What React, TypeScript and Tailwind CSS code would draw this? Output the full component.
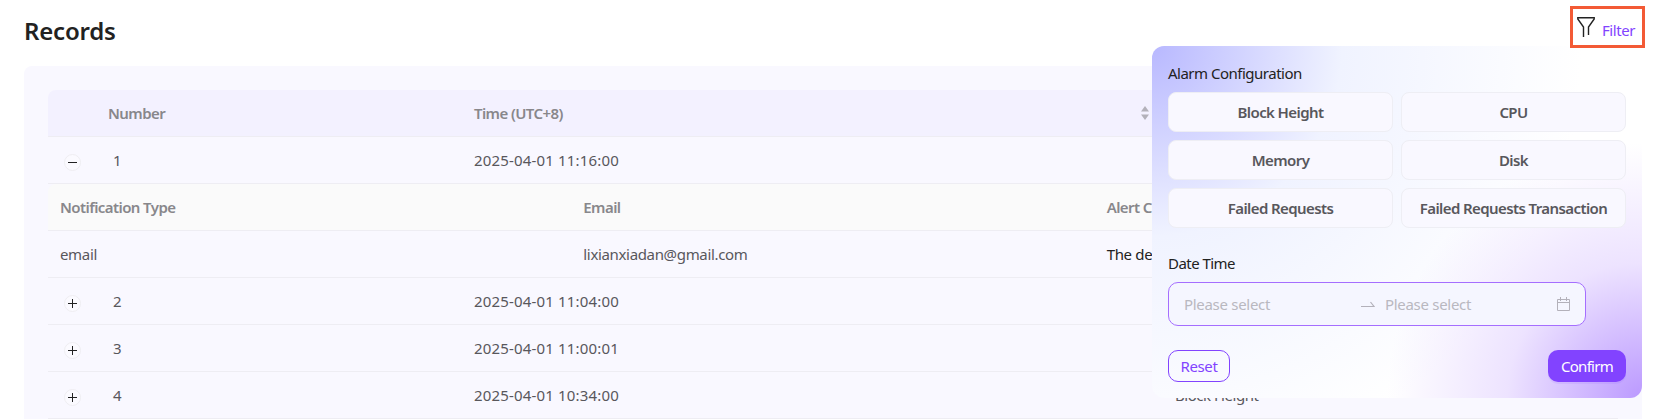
import clsx from 'clsx';

const RECORDS = [
  { number: 1, time: '2025-04-01 11:16:00', type: '', expanded: true },
  { number: 2, time: '2025-04-01 11:04:00', type: '', expanded: false },
  { number: 3, time: '2025-04-01 11:00:01', type: '', expanded: false },
  { number: 4, time: '2025-04-01 10:34:00', type: 'Block Height', expanded: false },
];

const ALARMS = [
  'Block Height',
  'CPU',
  'Memory',
  'Disk',
  'Failed Requests',
  'Failed Requests Transaction',
];

const ROW_GRID = 'grid h-[47px] grid-cols-[48px_366px_701px_1fr] items-center border-b border-[#eeedf3]';
const NESTED_GRID = 'grid h-[47px] grid-cols-3 items-center border-b border-[#eeedf3]';
const HEAD_TEXT = 'font-semibold tracking-[-0.58px] text-[#88878b]';

function ExpandButton({ expanded }: { expanded: boolean }) {
  return (
    <button className="mt-[5px] ml-4 flex size-[17px] items-center justify-center rounded-full border border-[#efeef2] bg-[#fbfaff]">
      <svg width="9" height="9" viewBox="0 0 9 9" stroke="#222" strokeWidth="1">
        <path d="M0 4.5H9" />
        {!expanded && <path d="M4.5 0V9" />}
      </svg>
    </button>
  );
}

function NestedTable() {
  return (
    <div>
      <div className={clsx(NESTED_GRID, HEAD_TEXT, 'rounded-tl-lg bg-[#fafafa]')}>
        <span className="pl-3">Notification Type</span>
        <span className="pl-3">Email</span>
        <span className="pl-3">Alert C</span>
      </div>
      <div className={clsx(NESTED_GRID, 'tracking-[-0.34px] text-[#58575c]')}>
        <span className="pl-3">email</span>
        <span className="pl-3">lixianxiadan@gmail.com</span>
        <span className="pl-3 text-[#222]">The de</span>
      </div>
    </div>
  );
}

function RecordsTable() {
  return (
    <div className="mx-6 text-[15px]">
      <div className={clsx(ROW_GRID, HEAD_TEXT, 'rounded-t-lg bg-[#f3f1ff]')}>
        <span />
        <span className="pl-3">Number</span>
        <span className="flex items-center justify-between pr-3.5 pl-3">
          Time (UTC+8)
          <svg width="8" height="14" viewBox="0 0 8 14" fill="#b3b1ba">
            <path d="M4 0L8 5.5H0ZM4 14L0 8.5H8Z" />
          </svg>
        </span>
        <span />
      </div>
      {RECORDS.map(({ number, time, type, expanded }) => (
        <div key={number}>
          <div className={clsx(ROW_GRID, 'text-[#58575c]')}>
            <ExpandButton expanded={expanded} />
            <span className="pl-[17px]">{number}</span>
            <span className="pl-3 tracking-[0.17px]">{time}</span>
            <span className="pl-3 tracking-[-0.48px]">{type}</span>
          </div>
          {expanded && <NestedTable />}
        </div>
      ))}
    </div>
  );
}

function FilterPanel() {
  return (
    <div className="absolute top-[46px] left-[1152px] h-[352px] w-[490px] rounded-xl bg-[radial-gradient(circle_at_100%_100%,#bb99ff_0px,#ede3ff_135px,#ffffff00_255px),radial-gradient(circle_at_0%_0%,#b8b8ff_0px,#f0f3ff_190px,#ffffff_430px)] px-4 pt-4 text-[15px] text-[#222]">
      <h2 className="h-[22px] leading-[22px] tracking-[-0.5px]">Alarm Configuration</h2>
      <div className="mt-2 grid grid-cols-2 gap-2">
        {ALARMS.map((label) => (
          <button
            key={label}
            className="h-10 rounded-lg border border-[#eeeef4] bg-[#f9f8ff] font-semibold tracking-[-0.6px] text-[#58575c]"
          >
            {label}
          </button>
        ))}
      </div>
      <h2 className="mt-6 h-[22px] leading-[22px] tracking-[-0.55px]">Date Time</h2>
      <div className="mt-2 flex h-11 w-[418px] items-center rounded-[10px] border border-[#a56eff] bg-[#f5f6ff] px-[15px] tracking-[-0.3px] text-[#b9b8c0]">
        <span className="w-[177px]">Please select</span>
        <svg className="mr-[10px]" width="14" height="7" viewBox="0 0 14 7" fill="none" stroke="#b3b1ba" strokeWidth="1.2">
          <path d="M0 5.5H13L9.5 1" />
        </svg>
        <span className="flex-1">Please select</span>
        <svg width="13" height="14" viewBox="0 0 13 14" fill="none" stroke="#b3b1ba">
          <path d="M.5 2.5H12.5V13.5H.5ZM.5 5.5H12.5M3.5 0V4M9.5 0V4" />
        </svg>
      </div>
      <div className="mt-6 flex justify-between">
        <button className="h-8 w-[62px] rounded-[10px] border border-[#8243ff] tracking-[-0.4px] text-[#8243ff]">
          Reset
        </button>
        <button className="h-8 w-[78px] rounded-[10px] bg-[#8243ff] tracking-[-0.7px] text-white shadow-[0_2px_0_rgba(130,67,255,0.1)]">
          Confirm
        </button>
      </div>
    </div>
  );
}

export default function App() {
  return (
    <main className="relative h-[419px] w-[1669px] overflow-hidden bg-white font-['Noto_Sans',sans-serif]">
      <header className="flex h-[66px] justify-between pr-[24px] pl-6">
        <h1 className="mt-[15px] text-2xl leading-8 font-semibold tracking-[-0.2px] text-[#222]">Records</h1>
        <button className="relative z-10 mt-[6px] flex h-[42px] w-[75px] items-start border-[3px] border-[#f35a35] pt-2 pl-1 text-[15px] text-[#8243ff]">
          <svg width="18" height="20" viewBox="0 0 18 20" fill="none" stroke="#222" strokeWidth="1.4">
            <path d="M6.5 20V10L.8 2V.8H17.2V2L11.5 10V18" />
          </svg>
          <span className="ml-[7px] leading-[26px] tracking-[-0.45px]">Filter</span>
        </button>
      </header>
      <section className="mr-[27px] ml-6 h-[353px] rounded-t-lg bg-[#f9f8ff] pt-6">
        <RecordsTable />
      </section>
      <FilterPanel />
    </main>
  );
}
